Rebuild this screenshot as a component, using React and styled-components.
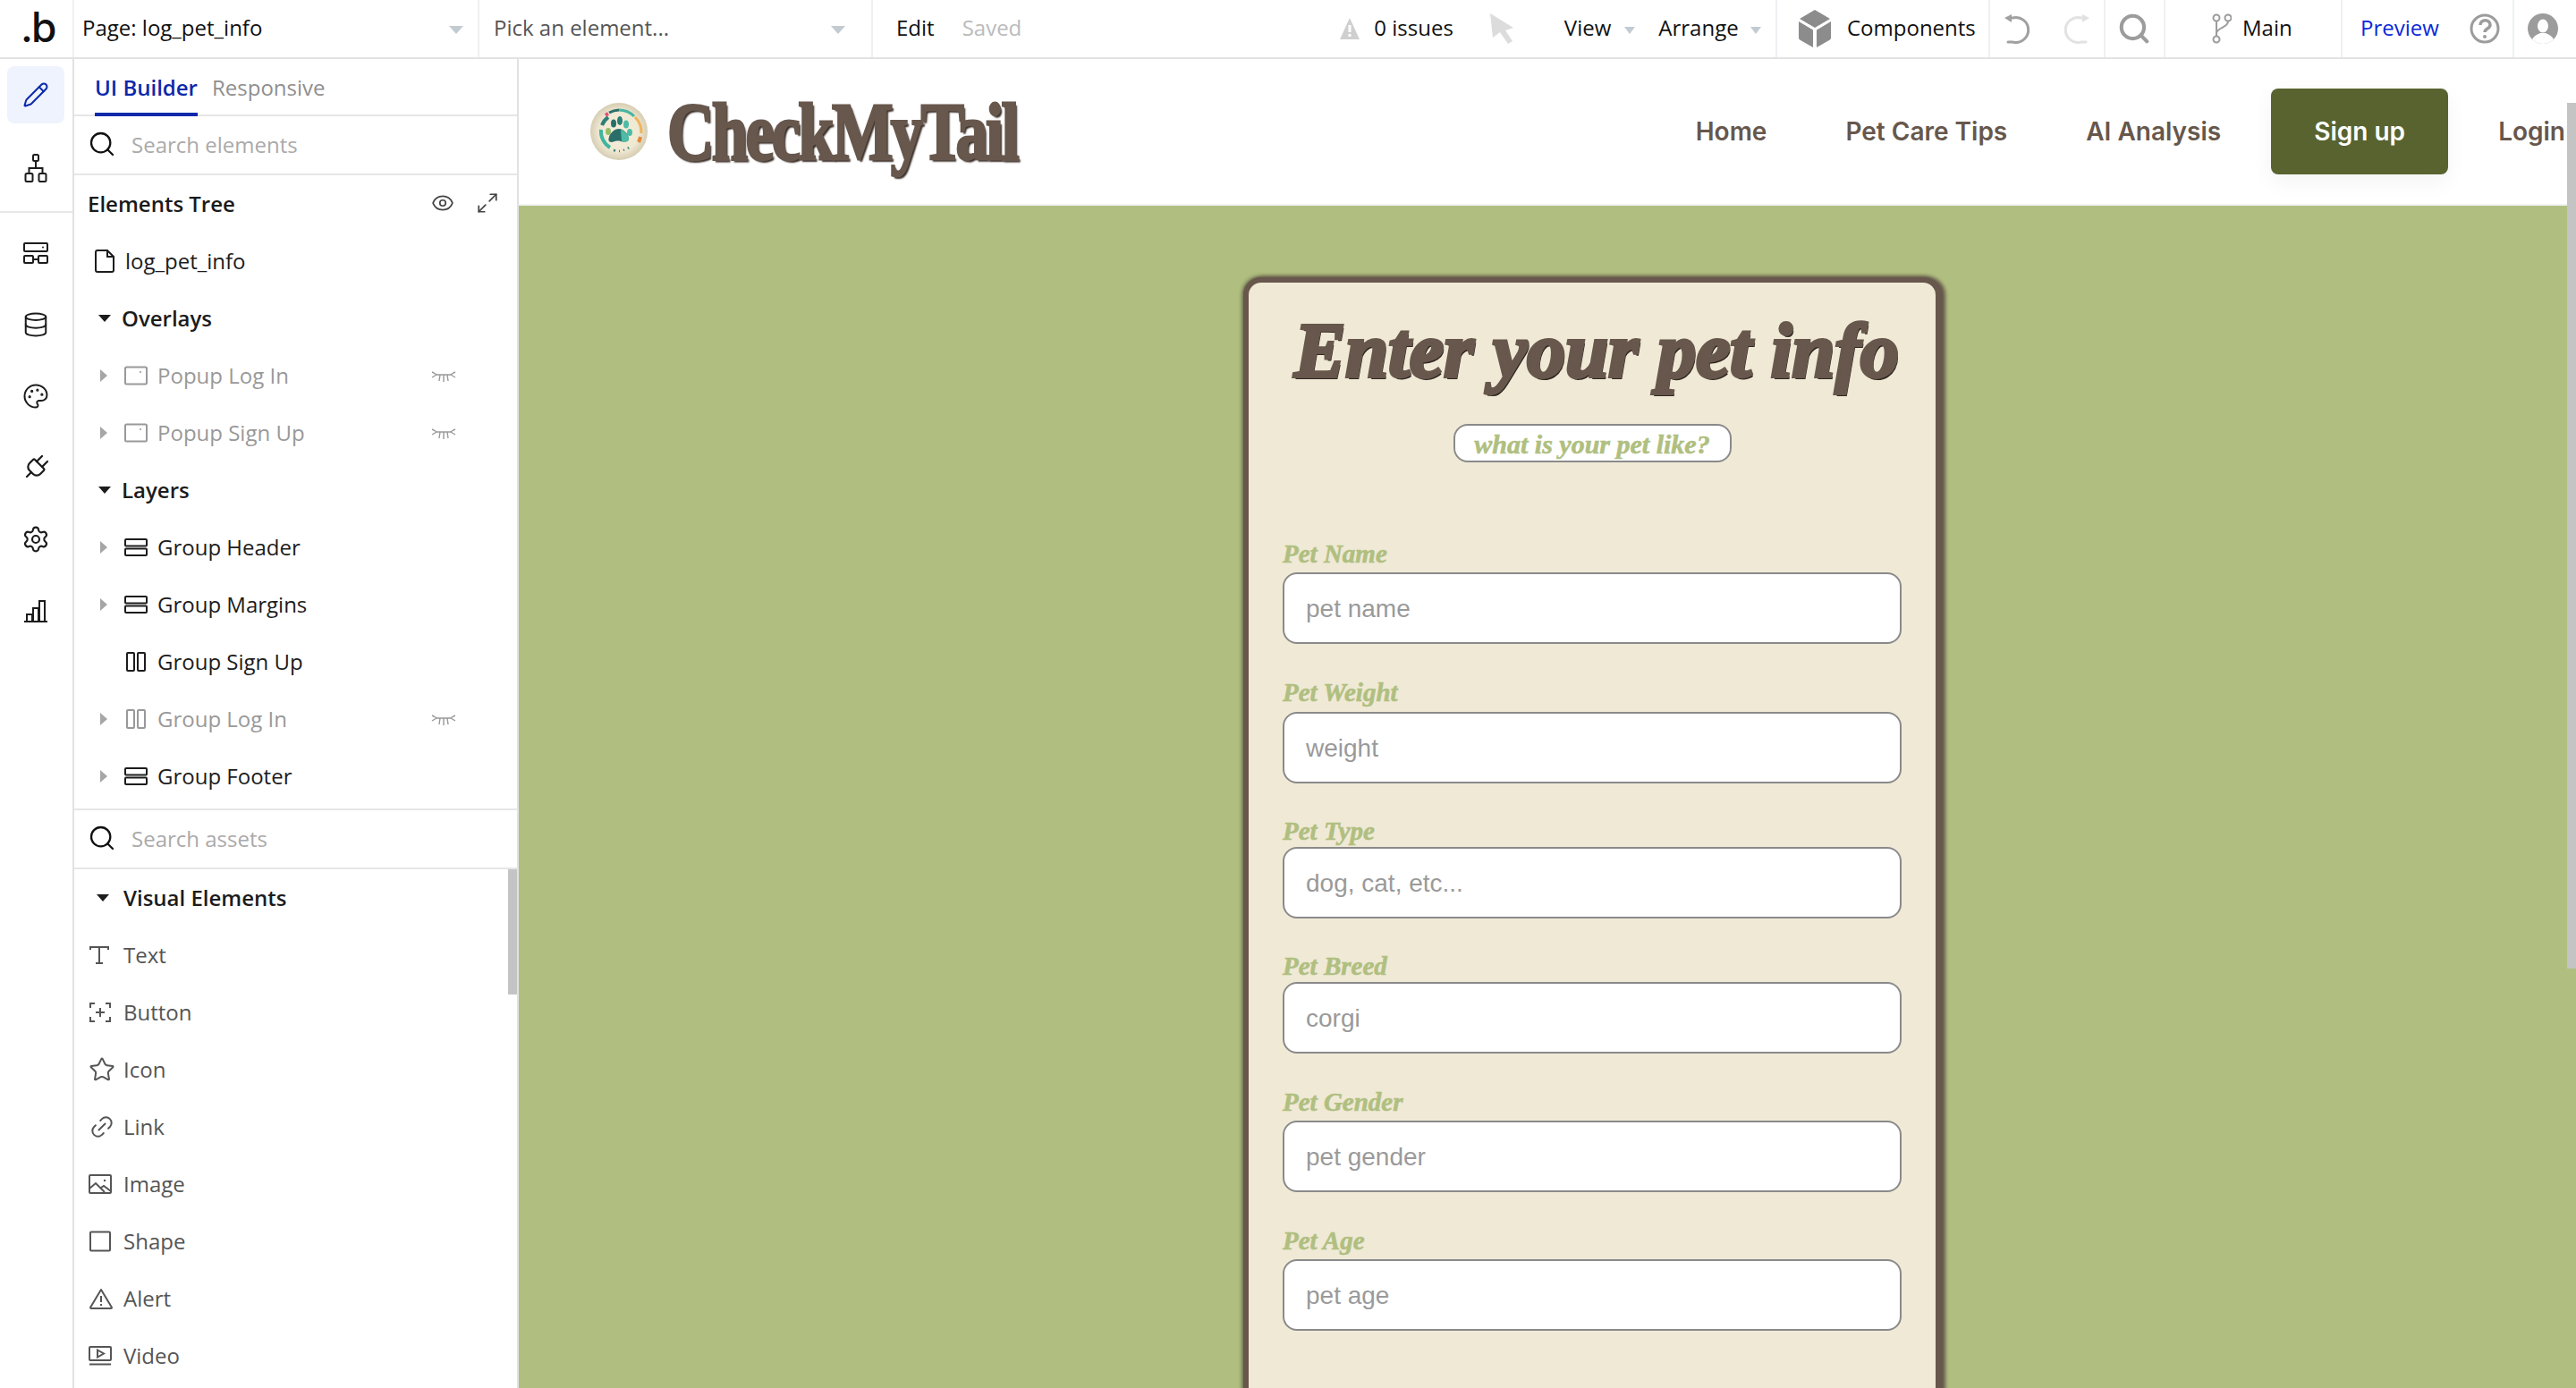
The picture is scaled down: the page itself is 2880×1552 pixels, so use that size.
import styled, { createGlobalStyle } from "styled-components";
import { Pencil, Database, Palette, Plug, Settings, Search, Star, Link2, Eye, Maximize2 } from "lucide-react";

const GlobalStyle = createGlobalStyle`
  html, body { margin: 0; padding: 0; background: #fff; overflow: hidden; }
  * { box-sizing: border-box; }
  input::placeholder { color: #9a9a9a; opacity: 1; }
`;

const Page = styled.div`
  width: 2880px;
  height: 1552px;
  display: flex;
  flex-direction: column;
  overflow: hidden;
  font-family: "Open Sans", sans-serif;
  font-size: 24px;
  color: #1a1a1a;
`;

const TopBar = styled.div`
  height: 66px;
  flex: none;
  display: flex;
  border-bottom: 2px solid #e2e2e2;
`;

const Cell = styled.div`
  width: ${(p) => p.$w}px;
  flex: none;
  height: 64px;
  display: flex;
  align-items: center;
  padding-left: ${(p) => p.$pl || 0}px;
  border-right: 2px solid #eef0f2;
`;

const BrandMark = styled.span`
  font-family: "Inter", sans-serif;
  font-size: 46px;
  font-weight: 500;
  line-height: 60px;
  letter-spacing: -2px;
  margin-top: -4px;
  color: #111;
`;

const TopText = styled.span`
  color: ${(p) => p.$color || "#111"};
  margin-left: ${(p) => p.$ml || 0}px;
  margin-top: -3px;
  white-space: nowrap;
`;

const Caret = styled.i`
  width: 0;
  height: 0;
  flex: none;
  border-left: ${(p) => p.$s / 2}px solid transparent;
  border-right: ${(p) => p.$s / 2}px solid transparent;
  border-top: ${(p) => p.$s * 0.62}px solid #c3cbd2;
  margin-left: ${(p) => p.$ml}px;
  margin-top: 3px;
`;

const IconSlot = styled.span`
  display: inline-flex;
  flex: none;
  margin-left: ${(p) => p.$ml || 0}px;
  color: ${(p) => p.$color || "inherit"};
`;

const Body = styled.div`
  flex: 1;
  display: flex;
  min-height: 0;
`;

const Rail = styled.div`
  width: 83px;
  flex: none;
  border-right: 2px solid #e2e2e2;
`;

const RailGroup = styled.div`
  display: flex;
  flex-direction: column;
  gap: ${(p) => p.$gap}px;
  padding: ${(p) => p.$top}px 9px 16px 8px;
  border-bottom: ${(p) => (p.$line ? "2px solid #e8e8e8" : "none")};
`;

const RailItem = styled.div`
  height: 64px;
  border-radius: 8px;
  display: flex;
  align-items: center;
  justify-content: center;
  background: ${(p) => (p.$active ? "#eef3fd" : "transparent")};
  color: ${(p) => (p.$active ? "#0c29ab" : "#1c1c1c")};
`;

const Panel = styled.div`
  width: 497px;
  flex: none;
  border-right: 2px solid #e2e2e2;
  overflow: hidden;
`;

const Tabs = styled.div`
  height: 64px;
  padding-left: 23px;
  display: flex;
  gap: 16px;
  border-bottom: 2px solid #e6e6e6;
`;

const Tab = styled.div`
  height: 64px;
  display: flex;
  align-items: center;
  padding-top: 2px;
  border-bottom: 4px solid ${(p) => (p.$active ? "#0c29ab" : "transparent")};
  color: ${(p) => (p.$active ? "#0c29ab" : "#8f8f8f")};
  font-weight: ${(p) => (p.$active ? 600 : 400)};
`;

const SearchRow = styled.div`
  height: ${(p) => p.$h}px;
  display: flex;
  align-items: center;
  padding: 0 0 2px 15px;
  gap: 17px;
  color: #aaa;
  border-bottom: 2px solid #e6e6e6;
  border-top: ${(p) => (p.$top ? "2px solid #e6e6e6" : "none")};
  & svg { color: #111; }
`;

const TreeHead = styled.div`
  height: 64px;
  display: flex;
  align-items: center;
  padding: 0 0 2px 15px;
  font-weight: 600;
  position: relative;
`;

const HeadIcons = styled.div`
  margin-left: auto;
  margin-right: 20px;
  display: flex;
  gap: 24px;
  color: #444;
`;

const TreeList = styled.div`
  padding-bottom: 4px;
`;

const Row = styled.div`
  height: 64px;
  display: flex;
  align-items: center;
  padding-left: ${(p) => p.$pl}px;
  color: ${(p) => (p.$dim ? "#999" : p.$soft ? "#555" : "#1c1c1c")};
  font-weight: ${(p) => (p.$bold ? 600 : 400)};
`;

const RowText = styled.span`
  position: absolute;
  left: ${(p) => p.$x}px;
  top: 15px;
  white-space: nowrap;
`;

const RowWrap = styled.div`
  position: relative;
`;

const RightArrow = styled.i`
  width: 0;
  height: 0;
  flex: none;
  border-top: 7px solid transparent;
  border-bottom: 7px solid transparent;
  border-left: 8px solid #a6a6a6;
  margin-right: 19px;
`;

const NoArrow = styled.i`
  width: 8px;
  margin-right: 19px;
`;

const DownArrow = styled.i`
  width: 0;
  height: 0;
  flex: none;
  border-left: 7px solid transparent;
  border-right: 7px solid transparent;
  border-top: 8px solid #1c1c1c;
`;

const Lashes = styled.span`
  position: absolute;
  left: 399px;
  top: 26px;
  color: #999;
  display: flex;
`;

const AssetList = styled.div`
  position: relative;
`;

const PanelScroll = styled.div`
  position: absolute;
  right: 0;
  top: 0;
  width: 10px;
  height: 140px;
  background: #c4c4c4;
`;

const Canvas = styled.div`
  flex: 1;
  min-width: 0;
  position: relative;
  overflow: hidden;
  display: flex;
  flex-direction: column;
`;

const CanvasScroll = styled.div`
  position: absolute;
  right: 0;
  top: 49px;
  width: 10px;
  height: 968px;
  background: #c4c4c4;
`;

const SiteHeader = styled.header`
  height: 164px;
  flex: none;
  display: flex;
  align-items: center;
  padding: 0 12px 0 80px;
  border-bottom: 2px solid #f2f2f2;
  background: #fff;
`;

const Wordmark = styled.div`
  font-family: "Liberation Serif", serif;
  font-weight: 700;
  font-size: 92px;
  line-height: 1;
  letter-spacing: -3.5px;
  color: #67574c;
  margin-left: 22px;
  width: 388px;
  white-space: nowrap;
  transform: scaleX(0.79);
  transform-origin: left center;
  -webkit-text-stroke: 3px #67574c;
  text-shadow: 3px 3px 2px #3a2e28;
`;

const Nav = styled.nav`
  margin-left: auto;
  display: flex;
  align-items: center;
  gap: 56px;
`;

const NavLinks = styled.div`
  display: flex;
  gap: 88px;
`;

const NavLink = styled.a`
  font-family: "Inter", sans-serif;
  font-weight: 600;
  font-size: 28px;
  color: #67574c;
  white-space: nowrap;
`;

const SignUp = styled.button`
  width: 198px;
  height: 96px;
  border: 0;
  border-radius: 8px;
  background: #586330;
  color: #fff;
  font-family: "Inter", sans-serif;
  font-weight: 600;
  font-size: 28px;
  box-shadow: 0 8px 24px rgba(0, 0, 0, 0.05);
`;

const Stage = styled.div`
  flex: 1;
  background: #b0bf80;
  padding: 80px 0 0 810px;
`;

const Card = styled.div`
  width: 780px;
  height: 1400px;
  background: #efe9d6;
  border: 6px solid #67574c;
  border-radius: 20px;
  box-shadow: 5px 0 4px #67574c, 0 -1px 5px rgba(70, 60, 50, 0.55), -1px 0 4px rgba(70, 60, 50, 0.55);
  padding: 0 38px;
  display: flex;
  flex-direction: column;
`;

const Title = styled.h1`
  margin: 16px 0 0;
  height: 120px;
  font-family: "Liberation Serif", serif;
  font-style: italic;
  font-weight: 700;
  font-size: 86px;
  line-height: 120px;
  text-align: center;
  white-space: nowrap;
  color: #67574c;
  -webkit-text-stroke: 4px #67574c;
  text-shadow: 2px 3px 0 #2f2621;
  position: relative;
  left: 5px;
`;

const Pill = styled.div`
  align-self: center;
  margin-top: 22px;
  width: 311px;
  height: 43px;
  border: 2px solid #8a8a8a;
  border-radius: 16px;
  background: #fff;
  color: #b0bf80;
  font-family: "Liberation Serif", serif;
  font-style: italic;
  font-weight: 700;
  font-size: 30px;
  line-height: 41px;
  text-align: center;
  white-space: nowrap;
  -webkit-text-stroke: 0.6px #b0bf80;
`;

const Field = styled.div`
  margin-top: ${(p) => p.$top}px;
`;

const FieldLabel = styled.label`
  display: block;
  height: 40px;
  font-family: "Liberation Serif", serif;
  font-style: italic;
  font-weight: 700;
  font-size: 29px;
  line-height: ${(p) => p.$lh}px;
  color: #b0bf80;
  -webkit-text-stroke: 0.6px #b0bf80;
`;

const FieldInput = styled.input`
  display: block;
  width: 692px;
  height: 80px;
  border: 2px solid #8a8a8a;
  border-radius: 16px;
  background: #fff;
  padding: 2px 25px 0 24px;
  font-family: "Liberation Sans", sans-serif;
  font-size: 28px;
  outline: none;
`;

const Svg = ({ w, h, vb, sw = 2, children, fill = "none" }) => (
  <svg width={w} height={h} viewBox={vb || `0 0 ${w} ${h}`} fill={fill} stroke="currentColor" strokeWidth={sw}>
    {children}
  </svg>
);

const PageIcon = () => (
  <Svg w={24} h={26}>
    <path d="M2 3a2 2 0 0 1 2-2h11l7 7v15a2 2 0 0 1-2 2H4a2 2 0 0 1-2-2z" />
    <path d="M15 1v7h7" />
  </Svg>
);

const PopupIcon = () => (
  <Svg w={26} h={22}>
    <rect x="1" y="1.5" width="24" height="19" rx="1.5" />
    <circle cx="18" cy="7" r="1" fill="currentColor" stroke="none" />
  </Svg>
);

const StackIcon = () => (
  <Svg w={26} h={20}>
    <rect x="1" y="1" width="24" height="7.5" rx="1" />
    <rect x="1" y="11.5" width="24" height="7.5" rx="1" />
  </Svg>
);

const ColsIcon = () => (
  <Svg w={26} h={22}>
    <rect x="3" y="1" width="8" height="20" rx="1" />
    <rect x="15" y="1" width="8" height="20" rx="1" />
  </Svg>
);

const HiddenIcon = () => (
  <Svg w={28} h={14} sw={1.4}>
    <path d="M1 2c3 1 4 3 6 3h14c2 0 3-2 6-3M1 8l5-3M27 8l-5-3M10 5l-1 7M18 5l1 7M14 5v8" />
  </Svg>
);

const TreeIcon = () => (
  <Svg w={26} h={32}>
    <rect x="10" y="1" width="6" height="7" rx="1.5" />
    <rect x="1.5" y="22" width="8" height="9" rx="1.5" />
    <rect x="16.5" y="22" width="8" height="9" rx="1.5" />
    <path d="M13 8v8M5.5 22v-6h15v6" />
  </Svg>
);

const DesignIcon = () => (
  <Svg w={30} h={26}>
    <rect x="2" y="2" width="26" height="9" rx="1" />
    <rect x="2" y="16" width="10" height="8" rx="1" />
    <rect x="18" y="16" width="10" height="8" rx="1" />
    <path d="M12 20h6" />
    <circle cx="23" cy="6.5" r="1" fill="currentColor" stroke="none" />
  </Svg>
);

const BarsIcon = () => (
  <Svg w={28} h={26}>
    <path d="M1 25h26M4 25v-8h6v8M11 25V10h6v15M18 25V2h6v23" />
  </Svg>
);

const TextIcon = () => (
  <Svg w={24} h={22}>
    <path d="M2 5V2h20v3M12 2v18M8 20h8" />
  </Svg>
);

const ButtonIcon = () => (
  <Svg w={26} h={24}>
    <path d="M7 2H2v5M19 2h5v5M7 22H2v-5M19 22h5v-5M13 7v10M8 12h10" />
  </Svg>
);

const ImageIcon = () => (
  <Svg w={26} h={22}>
    <rect x="1" y="1" width="24" height="20" rx="1" />
    <path d="M1 16l7-6 10 10M14 15l3-2 8 6" />
    <circle cx="18" cy="7" r="1.2" fill="currentColor" stroke="none" />
  </Svg>
);

const ShapeIcon = () => (
  <Svg w={26} h={24}>
    <rect x="2" y="1.5" width="22" height="21" rx="1" />
  </Svg>
);

const AlertIcon = () => (
  <Svg w={28} h={24}>
    <path d="M14 2L2 22a1 1 0 0 0 1 1h22a1 1 0 0 0 1-1z" strokeLinejoin="round" />
    <path d="M14 9v7M14 18v2" />
  </Svg>
);

const VideoIcon = () => (
  <Svg w={26} h={22}>
    <rect x="1" y="1" width="24" height="15" rx="1" />
    <path d="M10 4.5l7 4-7 4zM1 20.5h24" />
  </Svg>
);

const WarnIcon = () => (
  <Svg w={24} h={26} fill="#cfcfcf" sw={0}>
    <path d="M12 1L1 25h22z" />
    <path d="M10.5 9h3v8h-3zM10.5 19h3v3h-3z" fill="#fff" />
  </Svg>
);

const CursorIcon = () => (
  <Svg w={30} h={38} fill="#dcdcdc" sw={0}>
    <path d="M2 2l26 16-9 3 8 12-5 3-9-13-8 6z" />
  </Svg>
);

const CubeIcon = () => (
  <Svg w={36} h={42} fill="#8c8c8c" sw={0}>
    <path d="M18 0l17 10-17 10L1 10zM0 13l16 9.5V42L2 34a3 3 0 0 1-2-3zM36 13l-16 9.5V42l14-8a3 3 0 0 0 2-3z" />
  </Svg>
);

const UndoIcon = ({ color }) => (
  <svg width="32" height="34" viewBox="0 0 32 34" fill="none" stroke={color} strokeWidth="3">
    <path d="M7 5h3a14 14 0 1 1 0 27H5" strokeLinecap="round" />
    <path d="M1 5l8-4v9z" fill={color} stroke="none" />
  </svg>
);

const BranchIcon = () => (
  <Svg w={22} h={34} sw={2}>
    <circle cx="5" cy="5" r="3.5" />
    <circle cx="18" cy="5" r="3.5" />
    <circle cx="5" cy="29" r="3.5" />
    <path d="M5 9v16M18 9c0 7-13 7-13 13" />
  </Svg>
);

const HelpIcon = () => (
  <svg width="34" height="34" viewBox="0 0 34 34" fill="none" stroke="#9c9c9c" strokeWidth="3">
    <circle cx="17" cy="17" r="15" />
    <path d="M12 13c0-7 11-7 11 0 0 4-6 4-6 8" strokeWidth="3.5" />
    <circle cx="17" cy="26" r="2" fill="#9c9c9c" stroke="none" />
  </svg>
);

const AvatarIcon = () => (
  <svg width="34" height="34" viewBox="0 0 34 34">
    <defs>
      <clipPath id="avatar-clip">
        <circle cx="17" cy="17" r="17" />
      </clipPath>
    </defs>
    <circle cx="17" cy="17" r="17" fill="#9c9c9c" />
    <g clipPath="url(#avatar-clip)" fill="#fff">
      <ellipse cx="17" cy="14" rx="6" ry="7.5" />
      <path d="M4 34c0-8 6-10 10-12h6c4 2 10 4 10 12z" />
    </g>
  </svg>
);

const PawLogo = () => (
  <svg width="64" height="64" viewBox="0 0 64 64" fill="none">
    <defs>
      <radialGradient id="ball" cx="50%" cy="50%" r="50%">
        <stop offset="0%" stopColor="#f6f0dc" />
        <stop offset="70%" stopColor="#efe8d2" />
        <stop offset="100%" stopColor="#d6cdb3" />
      </radialGradient>
    </defs>
    <circle cx="32" cy="32" r="32" fill="url(#ball)" />
    <path d="M13 25a20 20 0 0 1 7-9" stroke="#2f7f78" strokeWidth="4" />
    <path d="M17 14a21 21 0 0 1 3-2" stroke="#e0507a" strokeWidth="4" />
    <path d="M21 11a24 24 0 0 1 11-3" stroke="#2a6e6a" strokeWidth="3" />
    <path d="M32 8a24 24 0 0 1 17 7" stroke="#48b5a0" strokeWidth="3" />
    <path d="M50 16a24 24 0 0 1 7 18" stroke="#efb45c" strokeWidth="3" />
    <path d="M56 38a24 24 0 0 1-2 6" stroke="#e28a3c" strokeWidth="4" />
    <path d="M12 30a21 21 0 0 0 10 20" stroke="#3fb5a0" strokeWidth="4" />
    <path d="M26 53l2 .5M32 54h1M37 53l1-.5M42 51l1-1" stroke="#2f7f78" strokeWidth="2.5" />
    <ellipse cx="26" cy="23" rx="3" ry="4.5" fill="#2a6e6a" />
    <ellipse cx="33" cy="20" rx="3" ry="5" fill="#2a7f78" />
    <ellipse cx="40" cy="24" rx="3" ry="4.5" fill="#4dbba6" />
    <ellipse cx="20" cy="32" rx="3" ry="4" fill="#95bd68" />
    <ellipse cx="44" cy="33" rx="3" ry="4" fill="#4dbba6" />
    <path d="M32 29c5 0 11 6 11 11 0 4-5 4-9 3-3-1-7 0-10 1-4 0-4-3-3-6 1-4 6-9 11-9z" fill="#2a6e6a" />
    <path d="M34 30c4 1 9 6 9 10 0 4-5 4-8 3z" fill="#4dbba6" />
  </svg>
);

const layers = [
  { name: "Popup Log In", icon: <PopupIcon />, dim: true, hidden: true, arrow: true },
  { name: "Popup Sign Up", icon: <PopupIcon />, dim: true, hidden: true, arrow: true },
];

const groups = [
  { name: "Group Header", icon: <StackIcon />, arrow: true },
  { name: "Group Margins", icon: <StackIcon />, arrow: true },
  { name: "Group Sign Up", icon: <ColsIcon /> },
  { name: "Group Log In", icon: <ColsIcon />, dim: true, hidden: true, arrow: true },
  { name: "Group Footer", icon: <StackIcon />, arrow: true },
];

const assets = [
  { name: "Text", icon: <TextIcon /> },
  { name: "Button", icon: <ButtonIcon /> },
  { name: "Icon", icon: <Star size={30} strokeWidth={1.6} /> },
  { name: "Link", icon: <Link2 size={30} strokeWidth={1.6} style={{ transform: "rotate(-45deg)" }} /> },
  { name: "Image", icon: <ImageIcon /> },
  { name: "Shape", icon: <ShapeIcon /> },
  { name: "Alert", icon: <AlertIcon /> },
  { name: "Video", icon: <VideoIcon /> },
];

const fields = [
  { label: "Pet Name", hint: "pet name", top: 83, lh: 38 },
  { label: "Pet Weight", hint: "weight", top: 36, lh: 37 },
  { label: "Pet Type", hint: "dog, cat, etc...", top: 31, lh: 44 },
  { label: "Pet Breed", hint: "corgi", top: 31, lh: 44 },
  { label: "Pet Gender", hint: "pet gender", top: 35, lh: 38 },
  { label: "Pet Age", hint: "pet age", top: 35, lh: 38 },
];

function LayerRow({ item }) {
  return (
    <RowWrap>
      <Row $pl={29} $dim={item.dim}>
        {item.arrow ? <RightArrow /> : <NoArrow />}
        <IconSlot>{item.icon}</IconSlot>
        <RowText $x={93}>{item.name}</RowText>
      </Row>
      {item.hidden && (
        <Lashes>
          <HiddenIcon />
        </Lashes>
      )}
    </RowWrap>
  );
}

function App() {
  return (
    <Page>
      <GlobalStyle />
      <TopBar>
        <Cell $w={83} $pl={23}>
          <BrandMark>.b</BrandMark>
        </Cell>
        <Cell $w={453} $pl={9}>
          <TopText>Page: log_pet_info</TopText>
          <Caret $s={16} $ml={209} />
        </Cell>
        <Cell $w={440} $pl={16}>
          <TopText $color="#555">Pick an element...</TopText>
          <Caret $s={16} $ml={181} />
        </Cell>
        <Cell $w={1011} $pl={26}>
          <TopText>Edit</TopText>
          <TopText $ml={31} $color="#bbb">Saved</TopText>
          <IconSlot $ml={355}><WarnIcon /></IconSlot>
          <TopText $ml={15}>0 issues</TopText>
          <IconSlot $ml={39}><CursorIcon /></IconSlot>
          <TopText $ml={55}>View</TopText>
          <Caret $s={13} $ml={15} />
          <TopText $ml={26}>Arrange</TopText>
          <Caret $s={13} $ml={13} />
        </Cell>
        <Cell $w={238} $pl={24}>
          <CubeIcon />
          <TopText $ml={18}>Components</TopText>
        </Cell>
        <Cell $w={129} $pl={15}>
          <UndoIcon color="#a0a0a0" />
          <IconSlot $ml={33}>
            <svg width="32" height="34" viewBox="0 0 32 34" style={{ transform: "scaleX(-1)" }}>
              <g>
                <path d="M7 5h3a14 14 0 1 1 0 27H5" fill="none" stroke="#e2e2e2" strokeWidth="3" strokeLinecap="round" />
                <path d="M1 5l8-4v9z" fill="#e2e2e2" />
              </g>
            </svg>
          </IconSlot>
        </Cell>
        <Cell $w={67} $pl={13}>
          <IconSlot $color="#9c9c9c"><Search size={38} strokeWidth={2.6} /></IconSlot>
        </Cell>
        <Cell $w={198} $pl={52}>
          <IconSlot $color="#9c9c9c"><BranchIcon /></IconSlot>
          <TopText $ml={12}>Main</TopText>
        </Cell>
        <Cell $w={192} $pl={20}>
          <TopText $color="#0b28d8">Preview</TopText>
          <IconSlot $ml={34}><HelpIcon /></IconSlot>
        </Cell>
        <Cell $w={71} $pl={15}>
          <AvatarIcon />
        </Cell>
      </TopBar>
      <Body>
        <Rail>
          <RailGroup $gap={18} $top={8} $line>
            <RailItem $active><Pencil size={30} strokeWidth={1.6} /></RailItem>
            <RailItem><TreeIcon /></RailItem>
          </RailGroup>
          <RailGroup $gap={16} $top={13}>
            <RailItem><DesignIcon /></RailItem>
            <RailItem><Database size={30} strokeWidth={1.6} /></RailItem>
            <RailItem><Palette size={30} strokeWidth={1.6} /></RailItem>
            <RailItem><Plug size={34} strokeWidth={1.6} style={{ transform: "rotate(45deg)" }} /></RailItem>
            <RailItem><Settings size={32} strokeWidth={1.6} /></RailItem>
            <RailItem><BarsIcon /></RailItem>
          </RailGroup>
        </Rail>
        <Panel>
          <Tabs>
            <Tab $active>UI Builder</Tab>
            <Tab>Responsive</Tab>
          </Tabs>
          <SearchRow $h={66}>
            <Search size={32} strokeWidth={1.7} style={{ transform: "scaleX(-1) rotate(90deg)" }} />
            <span>Search elements</span>
          </SearchRow>
          <TreeHead>
            Elements Tree
            <HeadIcons>
              <Eye size={26} strokeWidth={1.6} />
              <Maximize2 size={26} strokeWidth={1.6} />
            </HeadIcons>
          </TreeHead>
          <TreeList>
            <RowWrap>
              <Row $pl={22}>
                <PageIcon />
                <RowText $x={57}>log_pet_info</RowText>
              </Row>
            </RowWrap>
            <RowWrap>
              <Row $pl={27} $bold>
                <DownArrow />
                <RowText $x={53}>Overlays</RowText>
              </Row>
            </RowWrap>
            {layers.map((l) => (
              <LayerRow key={l.name} item={l} />
            ))}
            <RowWrap>
              <Row $pl={27} $bold>
                <DownArrow />
                <RowText $x={53}>Layers</RowText>
              </Row>
            </RowWrap>
            {groups.map((g) => (
              <LayerRow key={g.name} item={g} />
            ))}
          </TreeList>
          <SearchRow $h={68} $top>
            <Search size={32} strokeWidth={1.7} style={{ transform: "scaleX(-1) rotate(90deg)" }} />
            <span>Search assets</span>
          </SearchRow>
          <AssetList>
            <PanelScroll />
            <RowWrap>
              <Row $pl={25} $bold>
                <DownArrow />
                <RowText $x={55}>Visual Elements</RowText>
              </Row>
            </RowWrap>
            {assets.map((a) => (
              <RowWrap key={a.name}>
                <Row $pl={16} $soft>
                  <IconSlot>{a.icon}</IconSlot>
                  <RowText $x={55}>{a.name}</RowText>
                </Row>
              </RowWrap>
            ))}
          </AssetList>
        </Panel>
        <Canvas>
          <SiteHeader>
            <PawLogo />
            <Wordmark>CheckMyTail</Wordmark>
            <Nav>
              <NavLinks>
                <NavLink>Home</NavLink>
                <NavLink>Pet Care Tips</NavLink>
                <NavLink>AI Analysis</NavLink>
              </NavLinks>
              <SignUp>Sign up</SignUp>
              <NavLink>Login</NavLink>
            </Nav>
          </SiteHeader>
          <Stage>
            <Card>
              <Title>Enter your pet info</Title>
              <Pill>what is your pet like?</Pill>
              {fields.map((f) => (
                <Field key={f.label} $top={f.top}>
                  <FieldLabel $lh={f.lh}>{f.label}</FieldLabel>
                  <FieldInput placeholder={f.hint} readOnly />
                </Field>
              ))}
            </Card>
          </Stage>
          <CanvasScroll />
        </Canvas>
      </Body>
    </Page>
  );
}

export default App;
